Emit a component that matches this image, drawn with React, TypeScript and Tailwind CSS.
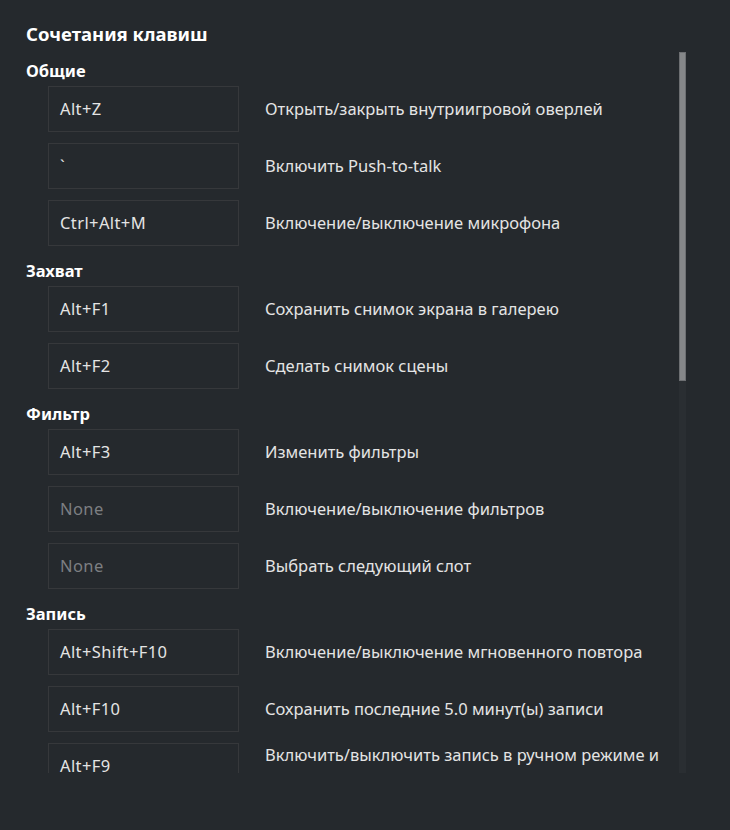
import React from "react";

type Row = { key: string; desc: string; none?: boolean };
type Section = { title: string; rows: Row[] };

const sections: Section[] = [
  {
    title: "Общие",
    rows: [
      { key: "Alt+Z", desc: "Открыть/закрыть внутриигровой оверлей" },
      { key: "`", desc: "Включить Push-to-talk" },
      { key: "Ctrl+Alt+M", desc: "Включение/выключение микрофона" },
    ],
  },
  {
    title: "Захват",
    rows: [
      { key: "Alt+F1", desc: "Сохранить снимок экрана в галерею" },
      { key: "Alt+F2", desc: "Сделать снимок сцены" },
    ],
  },
  {
    title: "Фильтр",
    rows: [
      { key: "Alt+F3", desc: "Изменить фильтры" },
      { key: "None", desc: "Включение/выключение фильтров", none: true },
      { key: "None", desc: "Выбрать следующий слот", none: true },
    ],
  },
  {
    title: "Запись",
    rows: [
      { key: "Alt+Shift+F10", desc: "Включение/выключение мгновенного повтора" },
      { key: "Alt+F10", desc: "Сохранить последние 5.0 минут(ы) записи" },
      { key: "Alt+F9", desc: "Включить/выключить запись в ручном режиме и трансляцию" },
      { key: "Alt+F8", desc: "Начать трансляцию" },
    ],
  },
];

export default function App() {
  return (
    <div
      className="w-[730px] h-[830px] bg-[#25292d] text-[#e6e6e6] overflow-hidden"
      style={{ fontFamily: '"Noto Sans", "Open Sans", sans-serif' }}
    >
      <div className="pl-[26px] pt-[22px] h-[46px] text-[18.5px] leading-[24px] font-bold text-white">
        Сочетания клавиш
      </div>
      <div className="mt-[6px] h-[721px] flex">
        <div className="flex-1 overflow-hidden pl-[26px] pt-[5px]">
          {sections.map((s) => (
            <div key={s.title}>
              <div className="h-[29px] flex items-center text-[16.5px] font-bold text-white">
                {s.title}
              </div>
              {s.rows.map((r, i) => (
                <div key={i} className="flex items-center mb-[11px]">
                  <div
                    className={
                      "ml-[22px] w-[191px] h-[46px] shrink-0 border border-[#36383b] flex items-center pl-[11px] text-[16.5px] tracking-[0.4px] " +
                      (r.none ? "text-[#7d7f82]" : "text-[#e4e4e4]")
                    }
                  >
                    {r.key}
                  </div>
                  <div className="ml-[26px] w-[405px] text-[16.5px] leading-[22px] text-[#e4e4e4]">
                    {r.desc}
                  </div>
                </div>
              ))}
            </div>
          ))}
        </div>
        <div className="w-[7px] mr-[44px] ml-[8px] bg-[#2a2e32] relative">
          <div className="h-[329px] w-[7px] bg-[#858789] border border-[#6d6f72]" />
        </div>
      </div>
    </div>
  );
}
